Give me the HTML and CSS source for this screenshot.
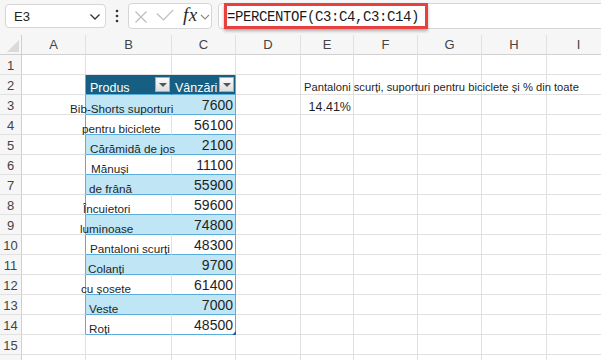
FILE: index.html
```html
<!DOCTYPE html>
<html>
<head>
<meta charset="UTF-8">
<title>PERCENTOF</title>
<link rel="stylesheet" href="styles.css">
<script type="text/javascript">
	function Sheet(m) {
		m = m ? m : {};
		m.rgsCols = ["", "A", "B", "C", "D", "E", "F", "G", "H", "I"];
		m.cuRows = 16;
		m.cuLabeledRows = 15;
		// produs, vanzari, shift of the text in B
		m.rgoData = [
			["Bib-Shorts suporturi", 7600, -16],
			["pentru biciclete", 56100, -4],
			["Cărămidă de jos", 2100, 4],
			["Mănuși", 11100, 5],
			["de frână", 55900, 3],
			["Încuietori", 59600, -3],
			["luminoase", 74800, -6],
			["Pantaloni scurți", 48300, 4],
			["Colanți", 9700, 2],
			["cu șosete", 61400, -5],
			["Veste", 7000, 3],
			["Roți", 48500, 3]
		];
		m.Build = function() {
			var s = "";
			for (var uCol = 0; uCol < m.rgsCols.length; uCol++) {
				s += "<div class='" + (uCol == 0 ? "corner" : "colhead") + "'>" + m.rgsCols[uCol] + "</div>";
			}
			for (var uRow = 1; uRow <= m.cuRows; uRow++) {
				s += "<div class='rowhead'><span>" + (uRow <= m.cuLabeledRows ? uRow : "") + "</span></div>";
				for (var uCol = 1; uCol < m.rgsCols.length; uCol++) {
					s += m.CreateCell(uRow, m.rgsCols[uCol]);
				}
			}
			document.getElementById("divSheet").innerHTML = s;
		};
		m.CreateCell = function(uRow, sCol) {
			var sClass = "cell";
			var sText = "";
			var bTable = uRow >= 2 && uRow <= 14;
			if (bTable && sCol == "A")
				sClass += " edge";
			if (bTable && (sCol == "B" || sCol == "C")) {
				sClass += uRow == 2 ? " thead" : (uRow % 2 == 1 ? " band" : " plain");
				sClass += sCol == "B" ? " tb" : " tc";
				if (uRow == 2) {
					sText = "<span class='htxt'>" + (sCol == "B" ? "Produs" : "Vânzări") + "</span><span class='filter'></span>";
				} else {
					var oRow = m.rgoData[uRow - 3];
					sText = sCol == "B" ?
						"<span class='txt' style='left:" + oRow[2] + "px'>" + oRow[0] + "</span>" :
						"<span class='num'>" + oRow[1] + "</span>";
				}
				if (uRow == 14 && sCol == "C")
					sClass += " last";
			}
			if (uRow == 2 && sCol == "E")
				sText = "<span class='note'>Pantaloni scurți, suporturi pentru biciclete și % din toate</span>";
			if (uRow == 3 && sCol == "E") {
				sClass += " right";
				sText = "<span class='pct'>14.41%</span>";
			}
			return "<div class='" + sClass + "'>" + sText + "</div>";
		};
		return m;
	}
	function OnLoad() {
		Sheet().Build();
	}
</script>
</head>
<body onload="javascript:OnLoad();">
<div class="toolbar">
	<div class="namebox">
		<span class="cellref">E3</span>
		<svg class="chev" width="12" height="8" viewBox="0 0 12 8"><path d="M1.5 1.5 L6 6 L10.5 1.5" fill="none" stroke="#333" stroke-width="1.3"/></svg>
	</div>
	<div class="dots">
		<svg width="4" height="14" viewBox="0 0 4 14"><circle cx="2" cy="2" r="1.3" fill="#333"/><circle cx="2" cy="7" r="1.3" fill="#333"/><circle cx="2" cy="12" r="1.3" fill="#333"/></svg>
	</div>
	<div class="fxbox">
		<svg class="cancel" width="14" height="14" viewBox="0 0 14 14"><path d="M1.5 1.5 L12.5 12.5 M12.5 1.5 L1.5 12.5" stroke="#bdbdbd" stroke-width="1.2"/></svg>
		<svg class="enter" width="18" height="13" viewBox="0 0 18 13"><path d="M0.8 4.5 L7.5 11 L17.2 0.8" fill="none" stroke="#bdbdbd" stroke-width="1.2"/></svg>
		<span class="fx">fx</span>
		<svg class="fxchev" width="10" height="6" viewBox="0 0 10 6"><path d="M1 1 L5 5 L9 1" fill="none" stroke="#8a8a8a" stroke-width="1.1"/></svg>
	</div>
	<div class="formula">
		<div class="highlight">=PERCENTOF(C3:C4,C3:C14)</div>
	</div>
</div>
<div id="divSheet" class="sheet"></div>
</body>
</html>
```

FILE: styles.css
```css
body{
	margin:0;
	width:601px;
	height:360px;
	overflow:hidden;
	background-color:#ffffff;
	font-family:"Liberation Sans", Arial, sans-serif;
	color:#1f1f1f;
}
.toolbar{
	height:35px;
	box-sizing:border-box;
	padding:3px 0 0 5px;
	display:flex;
	align-items:flex-start;
	background-color:#f6f6f6;
}
.namebox{
	width:101px;
	height:24px;
	margin-top:1px;
	box-sizing:border-box;
	border:1px solid #d6d6d6;
	border-radius:4px;
	background-color:#ffffff;
	display:flex;
	align-items:center;
	padding:0 4px 0 8px;
}
.cellref{
	font-size:13px;
	color:#222;
	flex:1;
}
.chev{
	margin-top:1px;
}
.dots{
	width:22px;
	height:26px;
	display:flex;
	align-items:center;
	justify-content:center;
}
.fxbox{
	width:84px;
	height:26px;
	box-sizing:border-box;
	border:1px solid #d6d6d6;
	border-radius:4px;
	background-color:#ffffff;
	display:flex;
	align-items:center;
	padding-left:5px;
}
.cancel{
	margin-top:1px;
}
.enter{
	margin-left:8px;
	margin-top:-1px;
}
.fx{
	font-family:"Liberation Serif", "Times New Roman", serif;
	font-style:italic;
	font-size:19px;
	color:#2a2a2a;
	margin-left:9px;
	margin-top:-2px;
	letter-spacing:0.5px;
}
.fxchev{
	margin-left:2px;
	margin-top:2px;
}
.formula{
	flex:1;
	height:26px;
	margin-left:6px;
	margin-right:-8px;
	box-sizing:border-box;
	border:1px solid #d6d6d6;
	border-radius:4px;
	background-color:#ffffff;
	padding-left:5px;
	display:flex;
}
.highlight{
	width:204px;
	height:26px;
	margin-top:-1px;
	box-sizing:border-box;
	border:3px solid #e8403f;
	box-shadow:0 2px 3px rgba(0,0,0,0.3);
	font-family:"Liberation Mono", "Courier New", monospace;
	font-size:14px;
	letter-spacing:-0.4px;
	line-height:20px;
	padding-top:1px;
	color:#1a1a1a;
	white-space:nowrap;
}
.sheet{
	display:grid;
	grid-template-columns:22px 64px 86px 64px 65px 53px 64px 64px 65px 64px;
	grid-auto-rows:20px;
}
.corner,
.colhead,
.rowhead,
.cell{
	box-sizing:border-box;
	height:20px;
	line-height:20px;
	white-space:nowrap;
	border-right:1px solid #e1e1e1;
	border-bottom:1px solid #e1e1e1;
}
.corner{
	background-color:#f6f6f6;
	border-right-color:#d0d0d0;
	border-bottom-color:#d0d0d0;
	position:relative;
}
.corner:after{
	content:"";
	position:absolute;
	right:2px;
	bottom:2px;
	border-left:12px solid transparent;
	border-bottom:12px solid #dadada;
}
.colhead{
	background-color:#f6f6f6;
	border-bottom-color:#d0d0d0;
	text-align:center;
	font-size:13px;
	color:#444;
}
.rowhead{
	background-color:#f6f6f6;
	border-right-color:#d0d0d0;
	text-align:center;
	font-size:13px;
	color:#444;
}
.rowhead span{
	position:relative;
	top:1px;
}
.cell.edge{
	border-right-color:#5aaddb;
}
.thead,
.band,
.plain{
	border-bottom-color:#5aaddb;
}
.thead{
	background-color:#165f82;
	border-right-color:#165f82;
	display:flex;
	align-items:flex-start;
}
.band{
	background-color:#c0e6f5;
}
.tb.band{
	border-right-color:#c0e6f5;
}
.tc{
	border-right-color:#5aaddb;
	text-align:right;
	padding-right:2px;
}
.tc.thead{
	border-right-color:#5aaddb;
	padding-right:0;
}
.htxt{
	color:#ffffff;
	font-size:12.5px;
	position:relative;
	top:3px;
	flex:1;
	text-align:left;
}
.tb .htxt{
	padding-left:4px;
}
.tc .htxt{
	padding-left:3px;
}
.filter{
	width:15px;
	height:15px;
	margin-top:2px;
	margin-right:1px;
	box-sizing:border-box;
	border:1px solid #a9a9a9;
	background:linear-gradient(#fbfbfb, #dedede);
	display:flex;
	align-items:center;
	justify-content:center;
}
.filter:after{
	content:"";
	border-left:4px solid transparent;
	border-right:4px solid transparent;
	border-top:4px solid #555;
}
.txt{
	font-size:11.7px;
	position:relative;
	z-index:1;
	top:3px;
}
.num{
	font-size:14px;
	position:relative;
	z-index:1;
}
.note{
	font-size:11.2px;
	position:relative;
	z-index:1;
	left:3px;
	top:1px;
}
.right{
	text-align:right;
	padding-right:2px;
}
.pct{
	font-size:12.5px;
	position:relative;
	top:1px;
}
.last{
	position:relative;
}
.last:after{
	content:"";
	position:absolute;
	right:-1px;
	bottom:-1px;
	border-left:4px solid transparent;
	border-bottom:4px solid #2f5a9e;
}
```
